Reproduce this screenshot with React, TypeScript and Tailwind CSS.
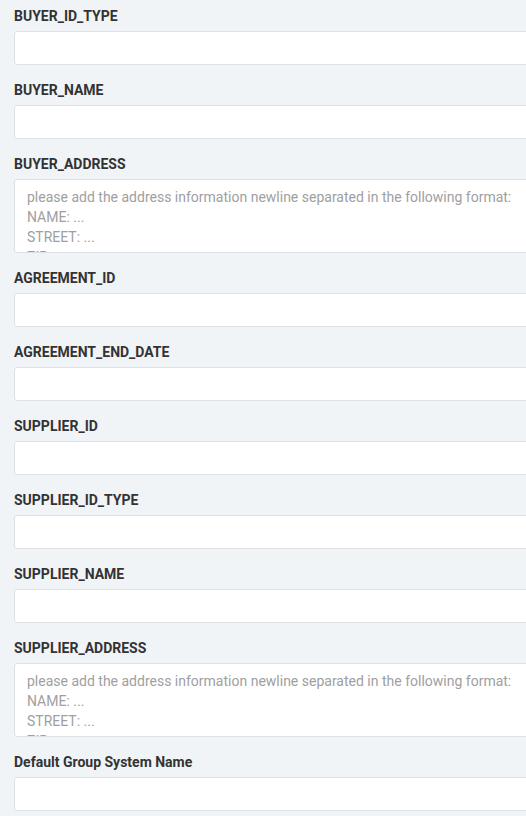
import React from "react";

type Field = { label: string; multiline?: boolean };

const fields: Field[] = [
  { label: "BUYER_ID_TYPE" },
  { label: "BUYER_NAME" },
  { label: "BUYER_ADDRESS", multiline: true },
  { label: "AGREEMENT_ID" },
  { label: "AGREEMENT_END_DATE" },
  { label: "SUPPLIER_ID" },
  { label: "SUPPLIER_ID_TYPE" },
  { label: "SUPPLIER_NAME" },
  { label: "SUPPLIER_ADDRESS", multiline: true },
  { label: "Default Group System Name" },
];

const placeholder =
  "please add the address information newline separated in the following format:\nNAME: ...\nSTREET: ...\nZIP: ...\nCITY: ...";

export default function App() {
  return (
    <div
      className="h-[816px] w-[526px] overflow-hidden bg-[#f1f4f7] pl-[14px] pt-2"
      style={{ fontFamily: "Roboto, 'Liberation Sans', sans-serif" }}
    >
      {fields.map((f) => (
        <div key={f.label} className="mb-[17px] flex w-[560px] flex-col">
          <label className="mb-[7px] text-[14px] font-bold leading-4 text-[#333333]">{f.label}</label>
          {f.multiline ? (
            <textarea
              readOnly
              placeholder={placeholder}
              className="h-[74px] w-full resize-none overflow-hidden rounded-[3px] border border-[#dde1e6] bg-white px-3 pt-[7px] text-[14px] leading-5 text-[#333] outline-none placeholder:text-[#a0a0a0]"
            />
          ) : (
            <input
              readOnly
              className="h-[34px] w-full rounded-[3px] border border-[#dde1e6] bg-white px-3 text-[14px] outline-none"
            />
          )}
        </div>
      ))}
    </div>
  );
}
